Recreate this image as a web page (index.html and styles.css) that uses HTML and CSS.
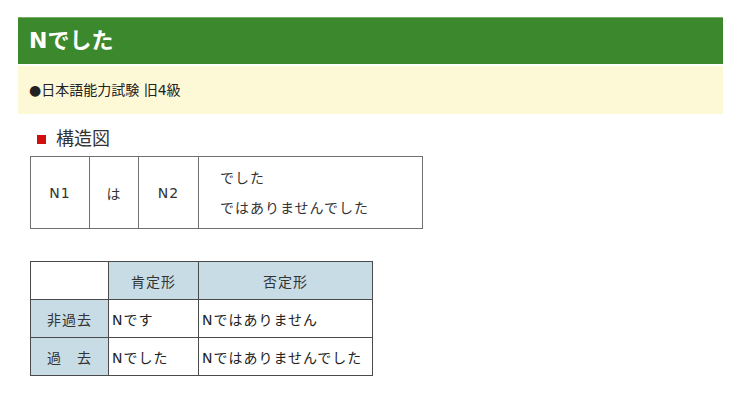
FILE: index.html
```html
<!DOCTYPE html>
<html lang="ja">
<head>
<meta charset="utf-8">
<link rel="stylesheet" href="styles.css">
</head>
<body>
<div class="page">
  <h1 class="title">Nでした</h1>
  <div class="level">●日本語能力試験 旧4級</div>
  <h2 class="section"><span class="mark"></span>構造図</h2>
  <table class="structure">
    <tr>
      <td class="c1">N1</td>
      <td class="c2">は</td>
      <td class="c3">N2</td>
      <td class="c4"><div class="line">でした</div><div class="line">ではありませんでした</div></td>
    </tr>
  </table>
  <table class="forms">
    <tr class="head">
      <th class="blank"></th>
      <th class="pos">肯定形</th>
      <th class="neg">否定形</th>
    </tr>
    <tr>
      <th class="rowhead">非過去</th>
      <td>Nです</td>
      <td>Nではありません</td>
    </tr>
    <tr>
      <th class="rowhead">過　去</th>
      <td>Nでした</td>
      <td>Nではありませんでした</td>
    </tr>
  </table>
</div>
</body>
</html>
```

FILE: styles.css
```css
html, body {
  margin: 0;
  padding: 0;
  background: #ffffff;
}
body {
  font-family: "DejaVu Sans", "Noto Sans CJK JP", sans-serif;
  color: #333333;
}
.page {
  width: 705px;
  margin-left: 18px;
  padding-top: 17px;
}
.title {
  margin: 0;
  height: 46px;
  line-height: 46px;
  background: #3c882c;
  border-top: 1px solid #78b06a;
  color: #ffffff;
  font-size: 22px;
  font-weight: bold;
  padding-left: 11px;
}
.level {
  margin-top: 2px;
  height: 48px;
  line-height: 48px;
  background: #fdf8d6;
  font-size: 14px;
  padding-left: 11px;
  color: #222222;
}
.section {
  margin: 14px 0 0 19px;
  height: 22px;
  line-height: 22px;
  font-size: 18px;
  font-weight: normal;
  display: flex;
  align-items: center;
  color: #333333;
}
.mark {
  width: 9px;
  height: 9px;
  background: #d0100c;
  margin-right: 10px;
}
table {
  border-collapse: collapse;
  margin-left: 12px;
  font-size: 14px;
  letter-spacing: 1px;
}
.structure {
  margin-top: 6px;
  width: 393px;
  height: 73px;
}
.structure td {
  border: 1px solid #707070;
  padding: 0;
  text-align: center;
  vertical-align: middle;
}
.structure .c1 { width: 58px; }
.structure .c2 { width: 48px; }
.structure .c3 { width: 59px; }
.structure .c4 {
  text-align: left;
  padding-left: 21px;
}
.line {
  line-height: 30px;
}
.forms {
  margin-top: 32px;
  width: 343px;
}
.forms th, .forms td {
  border: 1px solid #4a4a4a;
  height: 37px;
  padding: 0;
  font-weight: normal;
  vertical-align: middle;
}
.forms td {
  text-align: left;
  padding-left: 3px;
  color: #222222;
}
.forms .head th {
  background: #c8dce6;
  text-align: center;
}
.forms .head .blank {
  background: #ffffff;
  width: 77px;
}
.forms .head .pos { width: 89px; }
.forms .rowhead {
  background: #c8dce6;
  text-align: center;
}
```
